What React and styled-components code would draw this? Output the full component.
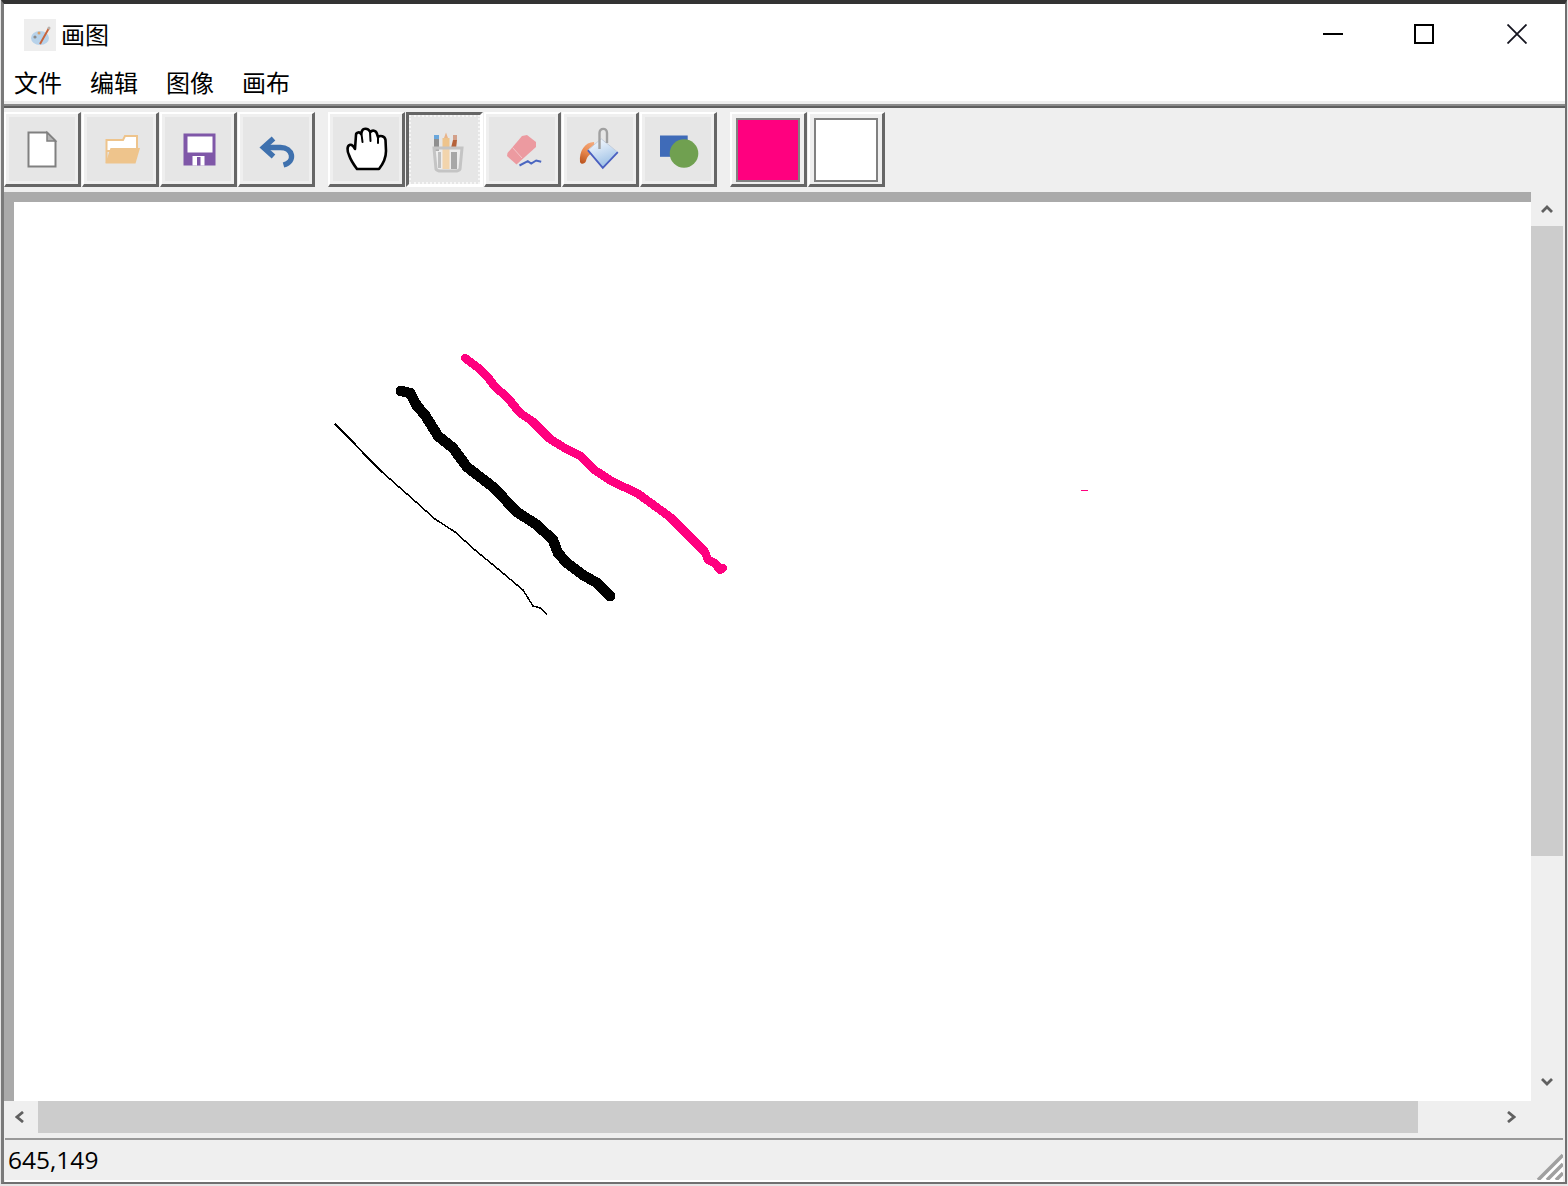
import styled, { createGlobalStyle, css } from "styled-components";

const GlobalStyle = createGlobalStyle`
  html, body {
    margin: 0;
    padding: 0;
    width: 1568px;
    height: 1186px;
    overflow: hidden;
    background: #e6e6e6;
  }
  * {
    box-sizing: border-box;
  }
`;

const Window = styled.div`
  width: 1566px;
  height: 1184px;
  margin-left: 1px;
  display: flex;
  flex-direction: column;
  background: #efefef;
  border-style: solid;
  border-color: #333333 #707070 #707070 #7a7a7a;
  border-width: 4px 2px 2px 3px;
  font-family: "Noto Sans CJK SC", "Open Sans", sans-serif;
  color: #000;
`;

const TitleBar = styled.div`
  height: 58px;
  flex: none;
  background: #fff;
  display: flex;
  align-items: flex-start;
  justify-content: space-between;
  padding: 15px 38px 0 20px;
`;

const TitleLeft = styled.div`
  display: flex;
  align-items: center;
  gap: 5px;
  font-size: 24px;
  line-height: 32px;
`;

const TitleText = styled.span`
  margin: -1px 0 1px 0;
`;

const AppIcon = styled.svg`
  width: 32px;
  height: 32px;
  background: #eeeeee;
  display: block;
`;

const WinControls = styled.div`
  display: flex;
  gap: 71px;
  padding-top: 5px;
`;

const WinIcon = styled.svg`
  width: 20px;
  height: 20px;
  display: block;
  margin-left: ${(p) => p.$ml || 0}px;
  stroke: ${(p) => p.$color || "#000"};
  fill: none;
`;

const MenuBar = styled.div`
  height: 39px;
  flex: none;
  background: #fff;
  display: flex;
  gap: 28px;
  padding: 4px 0 3px 10px;
`;

const MenuItem = styled.span`
  font-size: 24px;
  line-height: 32px;
`;

const MenuRule = styled.div`
  height: 7px;
  flex: none;
  background: #efefef;
  border-bottom: 2px solid #5f5f5f;
  &::after {
    content: "";
    display: block;
    height: 2px;
    margin-top: 3px;
    background: #8a8a8a;
  }
`;

const Toolbar = styled.div`
  height: 84px;
  flex: none;
  display: flex;
  gap: 13px;
  padding: 4px 0 5px;
  background: #efefef;
`;

const ToolGroup = styled.div`
  display: flex;
  gap: 1px;
`;

const ToolButton = styled.div`
  width: 77px;
  height: 75px;
  display: flex;
  align-items: center;
  justify-content: center;
  background: #e6e6e6;
  border-style: solid;
  ${(p) =>
    p.$pressed
      ? css`
          border-width: 3px;
          border-color: #666666 #ffffff #ffffff #666666;
          outline: 2px dotted #f6f6f6;
          outline-offset: -5px;
        `
      : css`
          border-width: 2px 3px 3px 2px;
          border-color: #ffffff #666666 #666666 #ffffff;
          box-shadow: inset 0 0 0 3px #efefef;
        `}
`;

const ColorButton = styled(ToolButton)`
  background: #efefef;
  box-shadow: none;
  padding-top: 2px;
`;

const Swatch = styled.div`
  width: 64px;
  height: 64px;
  flex: none;
  border: 2px solid #808080;
  background: ${(p) => p.$color};
`;

const ToolIcon = styled.svg`
  width: 44px;
  height: 44px;
  flex: none;
  display: block;
  overflow: visible;
`;

const Workspace = styled.div`
  flex: none;
  display: grid;
  grid-template-columns: 1527px 33px;
  grid-template-rows: 909px 32px;
`;

const Viewport = styled.div`
  background: #aaaaaa;
  padding: 10px 0 0 10px;
`;

const Canvas = styled.div`
  width: 100%;
  height: 100%;
  background: #fff;
`;

const Drawing = styled.svg`
  display: block;
  width: 100%;
  height: 100%;
  shape-rendering: crispEdges;
`;

const VScroll = styled.div`
  display: flex;
  flex-direction: column;
  padding-right: 1px;
`;

const HScroll = styled.div`
  display: flex;
`;

const ArrowBox = styled.div`
  flex: none;
  display: flex;
  align-items: center;
  justify-content: center;
  width: ${(p) => p.$w || "100%"};
  height: ${(p) => p.$h || "100%"};
  padding: ${(p) => p.$pad || 0};
`;

const Arrow = styled.svg`
  display: block;
  fill: none;
  stroke: #606060;
  stroke-width: 2.8;
`;

const Thumb = styled.div`
  flex: none;
  background: #cccccc;
  width: ${(p) => p.$w || "100%"};
  height: ${(p) => p.$h || "100%"};
`;

const Spacer = styled.div`
  flex: 1;
`;

const StatusBar = styled.div`
  flex: 1;
  margin: 5px 2px 0 1px;
  border-top: 2px solid #999999;
  border-bottom: 2px solid #ffffff;
  display: flex;
  justify-content: space-between;
  align-items: flex-end;
  padding-left: 3px;
  min-height: 0;
`;

const StatusText = styled.span`
  font-family: "Open Sans", sans-serif;
  font-size: 24.5px;
  line-height: 38px;
  align-self: center;
`;

const Grip = styled.svg`
  width: 27px;
  height: 27px;
  display: block;
  flex: none;
`;

const thinLine =
  "335,424 355,444 363,453 382,472 407,494 435,519 455,532 475,550 498,569 523,590 533,606 540,608 547,614";
const blackLine =
  "401,391 410,393 417,406 425,415 438,436 453,448 467,467 493,487 517,512 537,525 553,540 558,553 567,563 583,575 597,583 610,596";
const pinkLine =
  "465,358 477,367 487,376 495,387 507,397 520,413 532,421 550,439 563,447 582,457 593,469 613,482 637,493 670,517 690,537 705,552 708,560 715,563 720,570 723,568";

const SaveIcon = () => (
  <ToolIcon viewBox="0 0 44 44">
    <rect x="7.5" y="6.5" width="32" height="32" fill="#7f57a8" />
    <rect x="11.5" y="9.5" width="25" height="16" fill="#fff" />
    <rect x="16.5" y="29" width="12" height="9.5" fill="#fff" />
    <rect x="21" y="30" width="3.5" height="8.5" fill="#7f57a8" />
  </ToolIcon>
);

const Pencils = () => (
  <ToolIcon viewBox="2 0 44 44">
    <rect x="13" y="11" width="5" height="12" fill="#8f8f8f" />
    <rect x="13" y="7" width="5" height="4" fill="#6aa7dc" />
    <path d="M30 20 L32 12 H36 L35 21 Z" fill="#b5623a" />
    <rect x="32" y="7" width="4" height="5" fill="#d3a08a" />
    <rect x="21.5" y="10" width="7" height="31" fill="#eec48c" />
    <path d="M23 10 L25 4.5 L27 10 Z" fill="#e9b48a" />
    <rect x="30" y="24" width="6" height="17" fill="#858585" />
    <rect x="17" y="24" width="3" height="16" fill="#a8a8a8" />
    <path d="M13 20 H41 L39 41 Q38 43 34 43 H20 Q16 43 15 41 Z" fill="#ffffff" fillOpacity=".28" stroke="#c4c4c4" strokeWidth="3" />
  </ToolIcon>
);

function App() {
  return (
    <>
      <GlobalStyle />
      <Window>
        <TitleBar>
          <TitleLeft>
            <AppIcon viewBox="0 0 32 32">
              <ellipse cx="16" cy="19" rx="9" ry="7" fill="#b7d2ea" />
              <circle cx="11" cy="18" r="1.6" fill="#8a8a8a" />
              <circle cx="15" cy="14" r="1.5" fill="#d9a06a" />
              <path d="M16 25 L25 9" stroke="#c8643c" strokeWidth="2" />
              <circle cx="25" cy="9" r="1.5" fill="#b9b2ac" />
            </AppIcon>
            <TitleText>画图</TitleText>
          </TitleLeft>
          <WinControls>
            <WinIcon viewBox="0 0 20 20">
              <path d="M0 10 H20" strokeWidth="2" />
            </WinIcon>
            <WinIcon viewBox="0 0 20 20">
              <rect x="1" y="1" width="18" height="18" strokeWidth="2" />
            </WinIcon>
            <WinIcon viewBox="0 0 20 20" $ml={2} $color="#14141e">
              <path d="M0.5 0.5 L19.5 19.5 M19.5 0.5 L0.5 19.5" strokeWidth="1.8" />
            </WinIcon>
          </WinControls>
        </TitleBar>
        <MenuBar>
          <MenuItem>文件</MenuItem>
          <MenuItem>编辑</MenuItem>
          <MenuItem>图像</MenuItem>
          <MenuItem>画布</MenuItem>
        </MenuBar>
        <MenuRule />
        <Toolbar>
          <ToolGroup>
            <ToolButton>
              <ToolIcon viewBox="0 0 44 44">
                <path d="M8.5 5.5 H27 L35.5 14 V39.5 H8.5 Z" fill="#fff" stroke="#808080" strokeWidth="2" />
                <path d="M27 5.5 V14 H35.5 Z" fill="#b5b5b5" stroke="#808080" strokeWidth="1.5" />
              </ToolIcon>
            </ToolButton>
            <ToolButton>
              <ToolIcon viewBox="0 0 44 44">
                <path d="M8.5 36 V13 H25 L27 9 H39 V24 H8.5 Z" fill="#fff" stroke="#eec48c" strokeWidth="2" />
                <path d="M12.5 21 H42 L37.5 36.5 H7.5 Z" fill="#eec48c" />
              </ToolIcon>
            </ToolButton>
            <ToolButton>
              <SaveIcon />
            </ToolButton>
            <ToolButton>
              <ToolIcon viewBox="-1 0 44 44" fill="none" stroke="#3f71ae" strokeWidth="5.4">
                <path d="M9.5 20.5 H25.5 C37.5 20.5 41.5 34.5 28.5 38" />
                <path d="M18.5 11.5 L8.5 20.5 L18.5 29.5" />
              </ToolIcon>
            </ToolButton>
          </ToolGroup>
          <ToolGroup>
            <ToolButton>
              <ToolIcon viewBox="-1 0 44 44">
                <path
                  d="M12 42 C9 38 6 34 4 28 C2 24 2 19 4.5 18 C6.5 17 8.5 19 10 22 L11 8 C11 5 15 4.5 16 7 L17 4 C18 1 23 1 24.5 4 L25.5 5 C27 3 31 3 32 7 L33 10 C35 8 40 9 40.5 13 L41 24 C41 30 38 37 34 42 Z"
                  fill="#fff"
                  stroke="#000"
                  strokeWidth="2.6"
                  strokeLinejoin="round"
                />
                <path d="M16.5 7 L17.5 15 M25 5 L25.5 14 M33 10 L33 16" fill="none" stroke="#000" strokeWidth="2" strokeLinecap="round" />
              </ToolIcon>
            </ToolButton>
            <ToolButton $pressed>
              <Pencils />
            </ToolButton>
            <ToolButton>
              <ToolIcon viewBox="-1 0 44 44">
                <path d="M21 9 L26 8 L35 15 L35 20 L15.5 37.5 L6 29 L6.5 26 Z" fill="#ec9aa0" />
                <path d="M11.5 20.5 L21 31" stroke="#f3c4c7" strokeWidth="1" />
                <path d="M18.5 38.5 L26.8 34.2 L30.2 36.5 L35.2 33.5 L40.2 34.8" fill="none" stroke="#4a66c0" strokeWidth="2" />
              </ToolIcon>
            </ToolButton>
            <ToolButton>
              <ToolIcon viewBox="1 0 44 44">
                <defs>
                  <linearGradient id="pail" x1="0.2" y1="0" x2="0.6" y2="1">
                    <stop offset="0" stopColor="#f8fbff" />
                    <stop offset="1" stopColor="#98bde4" />
                  </linearGradient>
                  <linearGradient id="paint" x1="0.6" y1="0" x2="0.3" y2="1">
                    <stop offset="0" stopColor="#f2a678" />
                    <stop offset="0.45" stopColor="#ea8a50" />
                    <stop offset="1" stopColor="#bd5620" />
                  </linearGradient>
                </defs>
                <path d="M17 15 C8 15 2 24 3 35 C4 38 8 37 9 34 C10 29 13 27 18 24 Z" fill="url(#paint)" />
                <path d="M24.2 11.8 L40.8 25.2 L25.8 40.8 L10.8 23.2 Z" fill="url(#pail)" stroke="#c4cedc" strokeWidth="1" />
                <path d="M40.8 25.2 L25.8 40.8 L10.8 23.2" fill="none" stroke="#4a5fc0" strokeWidth="1.8" />
                <path d="M22.5 22 V6 C22.5 0.5 30 0.5 30 6 V16" fill="none" stroke="#a0a0a0" strokeWidth="2.4" />
              </ToolIcon>
            </ToolButton>
            <ToolButton>
              <ToolIcon viewBox="-1.5 0 44 44">
                <rect x="2.5" y="8.5" width="27.7" height="21.3" fill="#3f6bb8" />
                <circle cx="26.5" cy="26.5" r="14.3" fill="#70a050" />
              </ToolIcon>
            </ToolButton>
          </ToolGroup>
          <ToolGroup>
            <ColorButton>
              <Swatch $color="#ff007f" />
            </ColorButton>
            <ColorButton>
              <Swatch $color="#ffffff" />
            </ColorButton>
          </ToolGroup>
        </Toolbar>
        <Workspace>
          <Viewport>
            <Canvas>
              <Drawing viewBox="14 202 1517 899">
                <polyline points={thinLine} fill="none" stroke="#000" strokeWidth="1.5" />
                <polyline points={blackLine} fill="none" stroke="#000" strokeWidth="10.5" strokeLinecap="round" strokeLinejoin="round" />
                <polyline points={pinkLine} fill="none" stroke="#ff007f" strokeWidth="8.5" strokeLinecap="round" strokeLinejoin="round" />
                <path d="M1081 490.5 H1088" stroke="#ff007f" strokeWidth="1" />
              </Drawing>
            </Canvas>
          </Viewport>
          <VScroll>
            <ArrowBox $h="34px">
              <Arrow width="12" height="8" viewBox="0 0 12 8">
                <path d="M1 7 L6 2 L11 7" />
              </Arrow>
            </ArrowBox>
            <Thumb $h="630px" />
            <Spacer />
            <ArrowBox $h="38px">
              <Arrow width="12" height="8" viewBox="0 0 12 8">
                <path d="M1 1 L6 6 L11 1" />
              </Arrow>
            </ArrowBox>
          </VScroll>
          <HScroll>
            <ArrowBox $w="34px" $pad="0 2px 0 0">
              <Arrow width="10" height="12" viewBox="0 0 10 12">
                <path d="M8 1 L2 6 L8 11" />
              </Arrow>
            </ArrowBox>
            <Thumb $w="1380px" />
            <Spacer />
            <ArrowBox $w="40px">
              <Arrow width="10" height="12" viewBox="0 0 10 12">
                <path d="M2 1 L8 6 L2 11" />
              </Arrow>
            </ArrowBox>
          </HScroll>
        </Workspace>
        <StatusBar>
          <StatusText>645,149</StatusText>
          <Grip viewBox="0 0 27 27">
            <path d="M0 27 L27 0 V27 Z" fill="#fff" />
            <path d="M2 27 L27 2 M11 27 L27 11 M20 27 L27 20" stroke="#a0a0a0" strokeWidth="3.6" fill="none" />
          </Grip>
        </StatusBar>
      </Window>
    </>
  );
}

export default App;
